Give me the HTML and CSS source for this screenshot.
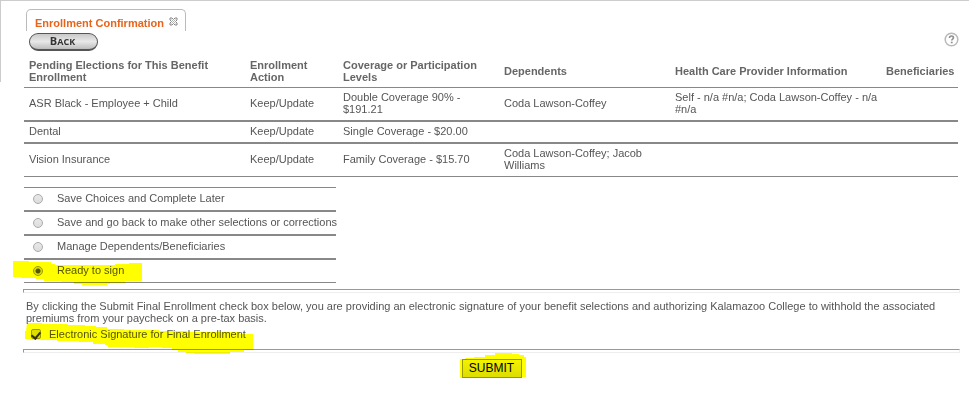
FILE: index.html
```
<!DOCTYPE html>
<html lang="en">
<head>
<meta charset="utf-8">
<title>Enrollment Confirmation</title>
<link rel="stylesheet" href="styles.css">
</head>
<body>
<main class="page">
  <header class="tabs">
    <div class="tab">
      <a class="tab-link" href="#">Enrollment Confirmation</a>
      <button class="tab-close" type="button" aria-label="Close tab">
        <svg viewBox="0 0 9 9" width="9" height="9"><path d="M1 1h2l1.500 1.500L6 1h2v2L6.500 4.500 8 6v2H6L4.500 6.500 3 8H1V6l1.500-1.500L1 3z" fill="#fff" stroke="#858585" stroke-width="1"/><path d="M2.500 2.500l4 4m0-4l-4 4" stroke="#b5b5b5"/></svg>
      </button>
    </div>
  </header>
  <div class="toolbar">
    <button class="back" type="button"><span class="back-initial">B</span>ACK</button>
    <a class="help" href="#" aria-label="Help">
      <svg viewBox="0 0 15 15" width="15" height="15"><circle cx="7.500" cy="7.500" r="6.300" fill="#fff" stroke="#b9b9b9" stroke-width="1.500"/><path d="M5.500 6c0-2.600 4-2.500 4-.2 0 1.300-1.800 1.400-1.800 2.700" fill="none" stroke="#909090" stroke-width="1.600"/><path d="M6.800 9.700h1.800v1.600H6.800z" fill="#909090"/></svg>
    </a>
  </div>
  <table class="elections">
    <colgroup><col class="c-plan"><col class="c-action"><col class="c-level"><col class="c-dep"><col class="c-info"><col class="c-ben"></colgroup>
    <thead>
      <tr><th>Pending Elections for This Benefit Enrollment</th><th>Enrollment Action</th><th>Coverage or Participation Levels</th><th>Dependents</th><th>Health Care Provider Information</th><th>Beneficiaries</th></tr>
    </thead>
    <tbody>
      <tr><td>ASR Black - Employee + Child</td><td>Keep/Update</td><td>Double Coverage 90% - $191.21</td><td>Coda Lawson-Coffey</td><td>Self - n/a #n/a; Coda Lawson-Coffey - n/a #n/a</td><td></td></tr>
      <tr><td>Dental</td><td>Keep/Update</td><td>Single Coverage - $20.00</td><td></td><td></td><td></td></tr>
      <tr><td>Vision Insurance</td><td>Keep/Update</td><td>Family Coverage - $15.70</td><td>Coda Lawson-Coffey; Jacob Williams</td><td></td><td></td></tr>
    </tbody>
  </table>
  <div class="options">
    <div class="option"><input type="radio" name="next" id="later"><label for="later">Save Choices and Complete Later</label></div>
    <div class="option"><input type="radio" name="next" id="return"><label for="return">Save and go back to make other selections or corrections</label></div>
    <div class="option"><input type="radio" name="next" id="manage"><label for="manage">Manage Dependents/Beneficiaries</label></div>
    <div class="option"><input type="radio" name="next" id="ready" checked><label for="ready">Ready to sign</label>
      <svg class="marker marker-ready" viewBox="0 0 129 24" width="129" height="24" aria-hidden="true"><path d="M0 0h16v1h22v2h4v1h60v-1h14v-1h13v18h-17v2h-15v1h-3v1H69v-1H61v-2H48v-1H31v-2H23v-1H8v-1H0z"/></svg>
    </div>
  </div>
  <hr>
  <p class="terms">By clicking the Submit Final Enrollment check box below, you are providing an electronic signature of your benefit selections and authorizing Kalamazoo College to withhold the associated premiums from your paycheck on a pre-tax basis.</p>
  <div class="sign"><input type="checkbox" id="esign" checked><label for="esign">Electronic Signature for Final Enrollment</label>
    <svg class="marker marker-sign" viewBox="0 0 229 32" width="229" height="32" aria-hidden="true"><path d="M2 0h15v1h26v1h17v1h11v1h11v2h17v1h35v1h28v1h53v2h13v16h-9v2h-14v2h-36v-1h-8v-1h-8v-2h-6v-2h-10v-1h-13v1h-15v-1h-26v-2H80v-1H68v-2H54v-1H32v-1H5v-1H0V8h1z"/></svg>
  </div>
  <hr>
  <div class="actions">
    <button class="submit" type="submit">SUBMIT</button>
    <svg class="marker marker-submit" viewBox="0 0 66 30" width="66" height="30" aria-hidden="true"><path d="M0 6h5V5h9V4h11V2h10V0h17v1h7v1h5v2h2v20h-4v1H52v2h-8v1H32v1H13v1H0z"/></svg>
  </div>
</main>
</body>
</html>
```
FILE: styles.css
```
* { box-sizing: border-box; }
body {
  margin: 0;
  background: #fff;
  color: #555;
  font: 11px/12px "Liberation Sans", Arial, sans-serif;
}
.page {
  position: relative;
  padding: 8px 9px 0 23px;
  border-top: 1px solid #ccc;
}
.page::before {
  content: "";
  position: absolute;
  left: 0;
  top: 0;
  width: 1px;
  height: 81px;
  background: #ccc;
}
input { flex: none; margin: 0; }
.tabs { display: flex; padding-left: 3px; }
.tab {
  display: flex;
  gap: 5px;
  height: 22px;
  width: 160px;
  padding: 7px 0 0 8px;
  border: 1px solid #bbb;
  border-bottom: 0;
  border-radius: 5px 5px 0 0;
}
.tab-link {
  color: #e8641b;
  font-weight: bold;
  text-decoration: none;
  white-space: nowrap;
}
.tab-close { display: block; width: 9px; height: 9px; padding: 0; border: 0; background: none; }
.tab-close svg, .help svg { display: block; }
.toolbar {
  display: flex;
  justify-content: space-between;
  align-items: center;
  height: 24px;
  padding: 0 1px 2px 6px;
}
.back {
  width: 69px;
  height: 18px;
  padding: 0 2px 0 0;
  border: 1px solid #555;
  border-bottom-width: 2px;
  border-radius: 9px;
  background: linear-gradient(#c9c9c9, #e8e8e8 50%, #bdbdbd);
  color: #333;
  font: bold 9px/14px "Open Sans", sans-serif;
}
.back-initial { font-size: 11px; }
.help { margin-top: -6px; }
.elections {
  width: calc(100% - 3px);
  margin-left: 1px;
  table-layout: fixed;
  border-collapse: separate;
  border-spacing: 0;
}
.c-plan { width: 221px; }
.c-action { width: 93px; }
.c-level { width: 161px; }
.c-dep { width: 171px; }
.c-info { width: 211px; }
.c-ben { width: 77px; }
.elections th, .elections td { padding: 3px 2px 5px 5px; text-align: left; vertical-align: middle; }
.elections th { padding: 4px 2px 4px 5px; color: #666; }
.elections td { border: solid #888; border-width: 1px 0; }
.options { width: 312px; margin: 10px 0 6px 1px; }
.option {
  position: relative;
  display: flex;
  align-items: center;
  gap: 14px;
  height: 24px;
  padding: 0 4px 0 9px;
  border: solid #888;
  border-width: 1px 0;
  white-space: nowrap;
}
.option label { padding-bottom: 2px; }
.option input {
  appearance: none;
  width: 10px;
  height: 10px;
  border: 1px solid #aaa;
  border-radius: 50%;
  background: linear-gradient(#e8e8e8, #ddd);
}
.option input:checked { border-color: #999; background: radial-gradient(circle, #555 0 2px, #ddd 3px); }
hr { height: 4px; margin: 0 0 4px; border: 1px solid; border-color: #999 #eee #eee #999; }
.terms { margin: 0; padding: 3px 9px 0 3px; }
.sign {
  position: relative;
  display: flex;
  align-items: center;
  gap: 8px;
  height: 20px;
  margin-bottom: 5px;
  padding-left: 8px;
}
.sign input {
  display: grid;
  place-items: start center;
  appearance: none;
  width: 10px;
  height: 10px;
  border: 1px solid #999;
  border-radius: 2px;
  background: #ddd;
}
.sign label { padding-bottom: 1px; }
.sign input:checked::before {
  content: "";
  width: 4px;
  height: 7px;
  border: solid #333;
  border-width: 0 2px 2px 0;
  transform: rotate(40deg);
}
.actions { position: relative; display: flex; justify-content: center; margin-top: 6px; }
.submit {
  width: 60px;
  height: 19px;
  padding: 0 0 1px;
  border: 1px solid #999;
  background: linear-gradient(#f2f2f2, #ddd);
  color: #000;
  font: 12px/14px "Liberation Sans", Arial, sans-serif;
}
.marker { position: absolute; fill: #ff0; mix-blend-mode: multiply; pointer-events: none; }
.marker-ready { left: -11px; top: 1px; }
.marker-sign { left: 2px; top: -1px; }
.marker-submit { left: calc(50% - 32px); top: -6px; }
```
